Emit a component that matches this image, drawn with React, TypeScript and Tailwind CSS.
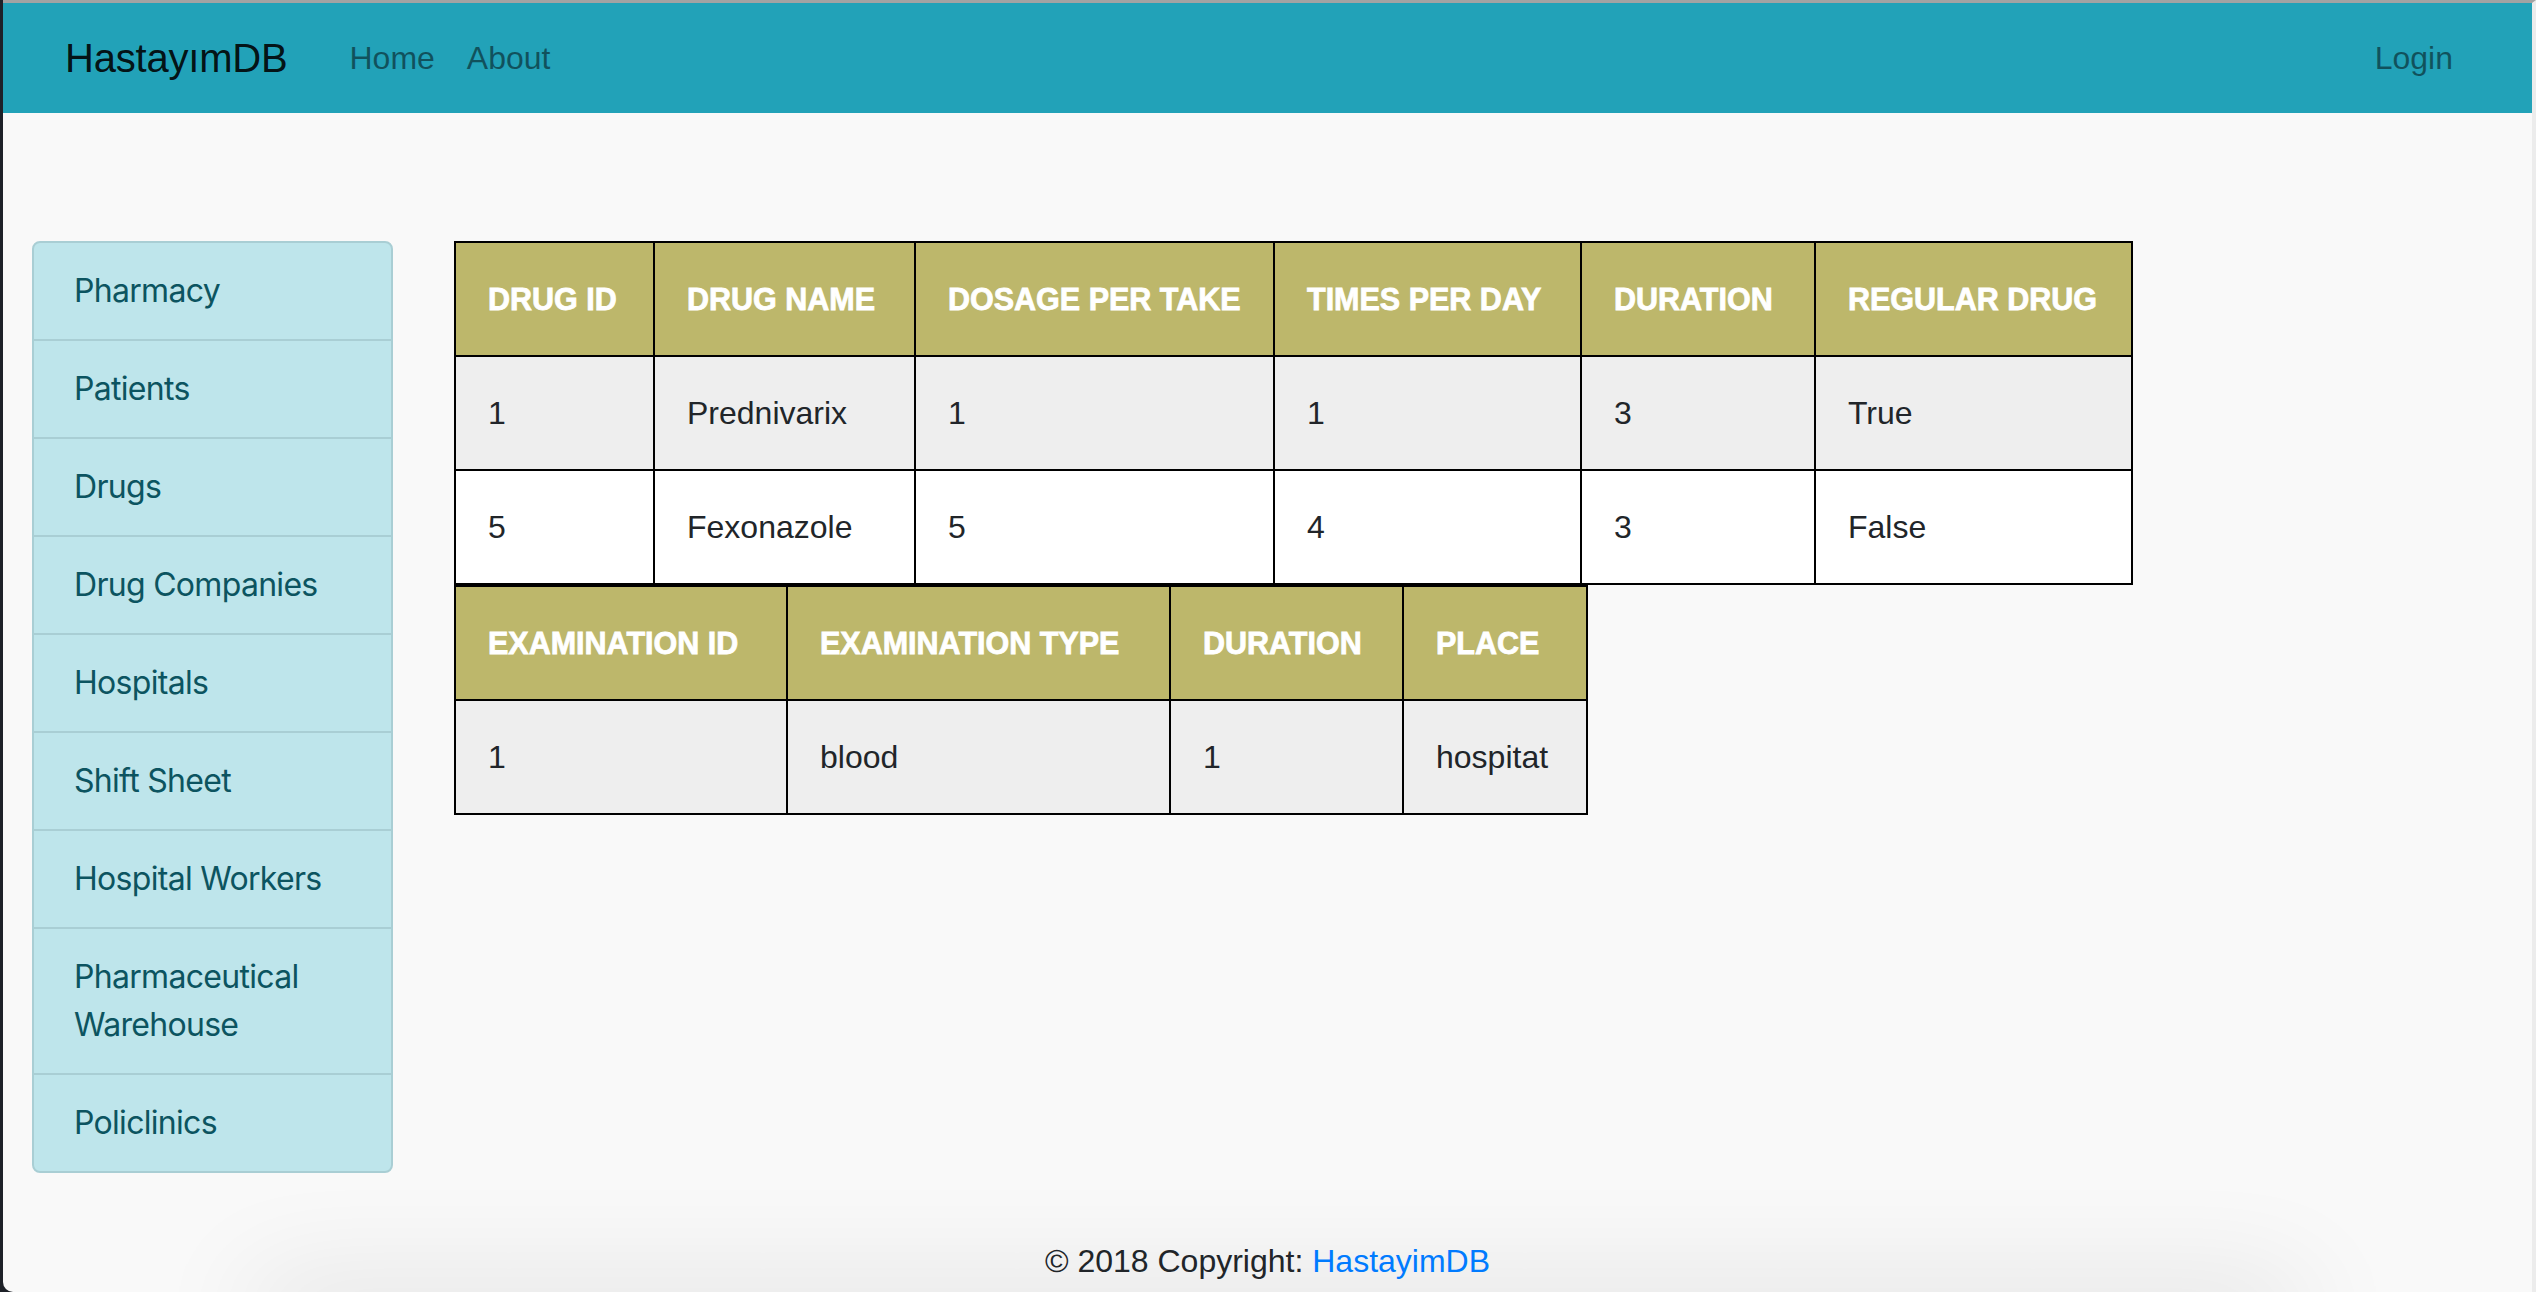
import React from "react";

const MENU = [
  "Pharmacy",
  "Patients",
  "Drugs",
  "Drug Companies",
  "Hospitals",
  "Shift Sheet",
  "Hospital Workers",
  "Pharmaceutical Warehouse",
  "Policlinics",
];

const DRUG_COLS = [
  { label: "DRUG ID", w: "w-[199px]" },
  { label: "DRUG NAME", w: "w-[261px]" },
  { label: "DOSAGE PER TAKE", w: "w-[359px]" },
  { label: "TIMES PER DAY", w: "w-[307px]" },
  { label: "DURATION", w: "w-[234px]" },
  { label: "REGULAR DRUG", w: "w-[317px]" },
];

const DRUGS = [
  ["1", "Prednivarix", "1", "1", "3", "True"],
  ["5", "Fexonazole", "5", "4", "3", "False"],
];

const EXAM_COLS = [
  { label: "EXAMINATION ID", w: "w-[332px]" },
  { label: "EXAMINATION TYPE", w: "w-[383px]" },
  { label: "DURATION", w: "w-[233px]" },
  { label: "PLACE", w: "w-[184px]" },
];

const EXAMS = [["1", "blood", "1", "hospitat"]];

function DataTable(props: { cols: { label: string; w: string }[]; rows: string[][]; width: string }) {
  const { cols, rows, width } = props;
  return (
    <table className={`${width} table-fixed border-collapse border-2 border-black font-['Liberation_Sans',Arial,sans-serif]`}>
      <colgroup>
        {cols.map((c) => (
          <col key={c.label} className={c.w} />
        ))}
      </colgroup>
      <thead>
        <tr className="bg-[#bdb76b]">
          {cols.map((c) => (
            <th
              key={c.label}
              className="border-2 border-black px-[32px] py-[32px] text-left text-[30.5px] leading-[48px] font-bold text-white whitespace-nowrap [-webkit-text-stroke:0.8px_white]"
            >
              {c.label}
            </th>
          ))}
        </tr>
      </thead>
      <tbody>
        {rows.map((r, i) => (
          <tr key={i} className={i % 2 === 0 ? "bg-[#eeeeee]" : "bg-white"}>
            {r.map((v, j) => (
              <td key={j} className="border-2 border-black px-[32px] py-[32px] text-[32px] leading-[48px] text-[#212529] whitespace-nowrap">
                {v}
              </td>
            ))}
          </tr>
        ))}
      </tbody>
    </table>
  );
}

export default function App() {
  return (
    <div className="h-[1292px] w-[2536px] overflow-hidden bg-[#1e2128] pl-[3px]">
      <div className="relative flex h-full flex-col overflow-hidden rounded-bl-[10px] border-t-[3px] border-r-4 border-t-[#a3a3a3] border-r-[#ececec] bg-[#f9f9f9]">
        {/* navbar */}
        <nav className="flex h-[110px] shrink-0 items-center bg-[#22a2b8] pl-[62px] pr-[63px] font-['Liberation_Sans',Arial,sans-serif]">
          <span className="text-[40px] leading-[60px] text-black/90 tracking-[-0.2px]">HastayımDB</span>
          <a className="ml-[62px] text-[32px] leading-[48px] text-black/50">Home</a>
          <a className="ml-[32px] text-[32px] leading-[48px] text-black/50">About</a>
          <a className="ml-auto px-[16px] text-[32px] leading-[48px] text-black/50">Login</a>
        </nav>

        {/* body */}
        <div className="flex flex-1 items-start pt-[128px]">
          <div className="ml-[29px] w-[361px] shrink-0 overflow-hidden rounded-[8px] border-2 border-[#a9ced4] bg-[#bee5eb] font-['Inter',sans-serif]">
            {MENU.map((m, i) => (
              <div
                key={m}
                className={`px-[40px] py-[24px] text-[32px] leading-[48px] text-[#0c5460] tracking-[-0.7px] ${i > 0 ? "border-t-2 border-[#a9ced4]" : ""}`}
              >
                {m}
              </div>
            ))}
          </div>

          <div className="ml-[61px] flex flex-col">
            <DataTable cols={DRUG_COLS} rows={DRUGS} width="w-[1677px]" />
            <DataTable cols={EXAM_COLS} rows={EXAMS} width="w-[1132px]" />
          </div>
        </div>

        {/* footer */}
        <footer className="relative flex h-[62px] shrink-0 items-center justify-center font-['Liberation_Sans',Arial,sans-serif] text-[32px] leading-[48px] text-[#212529]">
          <div className="pointer-events-none absolute left-[250px] right-[230px] top-[62px] h-[40px] shadow-[0_0_110px_rgba(0,0,0,0.16)]" />
          <span className="relative">
            © 2018 Copyright: <a className="text-[#007bff]">HastayimDB</a>
          </span>
        </footer>
      </div>
    </div>
  );
}
